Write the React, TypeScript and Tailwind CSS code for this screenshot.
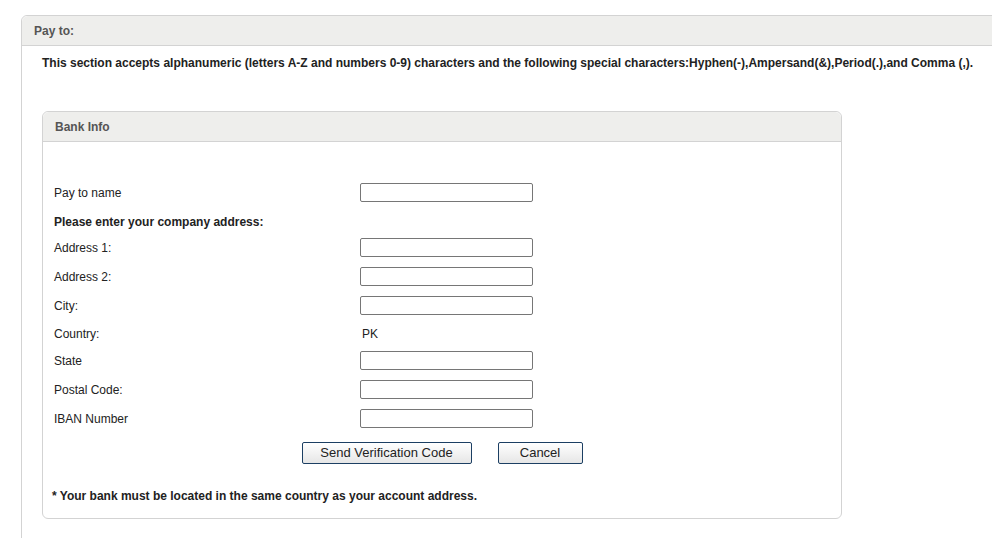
import React from "react"

const font = { fontFamily: '"Liberation Sans", Arial, sans-serif' }

function Field({ label }: { label: string }) {
  return (
    <div className="flex items-center h-[29px]">
      <div className="w-[306px] text-[12px] text-[#222]">{label}</div>
      <input
        type="text"
        className="w-[173px] h-[19px] border border-[#767676] rounded-[2px] bg-white outline-none"
      />
    </div>
  )
}

export default function App() {
  return (
    <div className="w-[992px] h-[538px] overflow-hidden bg-white" style={font}>
      <div className="pt-[15px] pl-[21px]">
        <div className="w-[1000px] h-[540px] border border-[#d3d3d3] rounded-tl-[6px]">
          <div className="h-[30px] bg-[#eeeeec] border-b border-[#d3d3d3] rounded-tl-[6px] flex items-center pl-[12px]">
            <span className="text-[12px] font-bold text-[#555]">Pay to:</span>
          </div>
          <div className="pl-[20px] pt-[10px]">
            <p className="text-[12px] font-bold text-[#222] leading-[14px]">
              This section accepts alphanumeric (letters A-Z and numbers 0-9) characters and the following special characters:Hyphen(-),Ampersand(&amp;),Period(.),and Comma (,).
            </p>
            <div className="mt-[41px] w-[800px] border border-[#d3d3d3] rounded-[6px]">
              <div className="h-[30px] bg-[#eeeeec] border-b border-[#d3d3d3] rounded-t-[6px] flex items-center pl-[12px]">
                <span className="text-[12px] font-bold text-[#555]">Bank Info</span>
              </div>
              <div className="pt-[36px] pl-[11px]">
                <Field label="Pay to name" />
                <div className="h-[26px] pt-[8px] leading-[14px] text-[12px] font-bold text-[#222]">
                  Please enter your company address:
                </div>
                <Field label="Address 1:" />
                <Field label="Address 2:" />
                <Field label="City:" />
                <div className="flex h-[26px] pt-[7px] leading-[14px] text-[12px] text-[#222]">
                  <div className="w-[308px]">Country:</div>
                  <div>PK</div>
                </div>
                <Field label="State" />
                <Field label="Postal Code:" />
                <Field label="IBAN Number" />
              </div>
              <div className="flex justify-center gap-[26px] mt-[9px]">
                <button className="w-[170px] h-[22px] border border-[#1c3f63] rounded-[2px] bg-gradient-to-b from-white to-[#e6e6e6] text-[13px] text-[#222]">
                  Send Verification Code
                </button>
                <button className="w-[85px] h-[22px] border border-[#1c3f63] rounded-[2px] bg-gradient-to-b from-white to-[#e6e6e6] text-[13px] text-[#222]">
                  Cancel
                </button>
              </div>
              <p className="pl-[9px] pt-[25px] pb-[15px] text-[12px] font-bold text-[#222] leading-[14px]">
                * Your bank must be located in the same country as your account address.
              </p>
            </div>
          </div>
        </div>
      </div>
    </div>
  )
}
